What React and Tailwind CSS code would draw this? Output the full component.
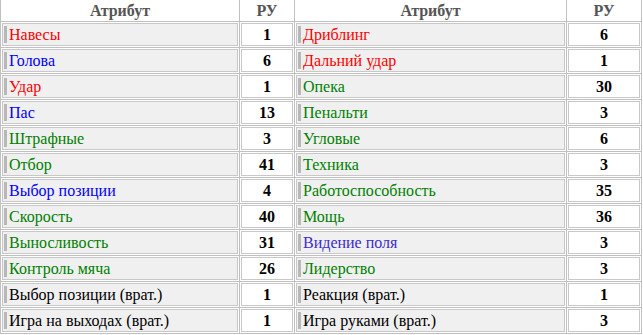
import React from 'react';

const rows = [
  ['Навесы', 'red', 1, 'Дриблинг', 'red', 6],
  ['Голова', 'blue', 6, 'Дальний удар', 'red', 1],
  ['Удар', 'red', 1, 'Опека', 'green', 30],
  ['Пас', 'blue', 13, 'Пенальти', 'green', 3],
  ['Штрафные', 'green', 3, 'Угловые', 'green', 6],
  ['Отбор', 'green', 41, 'Техника', 'green', 3],
  ['Выбор позиции', 'blue', 4, 'Работоспособность', 'green', 35],
  ['Скорость', 'green', 40, 'Мощь', 'green', 36],
  ['Выносливость', 'green', 31, 'Видение поля', 'violet', 3],
  ['Контроль мяча', 'green', 26, 'Лидерство', 'green', 3],
  ['Выбор позиции (врат.)', 'black', 1, 'Реакция (врат.)', 'black', 1],
  ['Игра на выходах (врат.)', 'black', 1, 'Игра руками (врат.)', 'black', 3],
];

const colors = {
  red: 'text-[#ff0000]',
  blue: 'text-[#0000ff]',
  green: 'text-[#008000]',
  violet: 'text-[#3a2bd6]',
  black: 'text-black',
};

function AttrCell({ name, color }) {
  return (
    <div className="bg-white p-px">
      <div className="flex h-[23px] items-center border border-[#c8c8c8] bg-[#f0f0f0]">
        <span className="ml-px mr-[2px] h-[17px] w-[3px] bg-[#b8b8b8]" />
        <span className={`whitespace-nowrap leading-none ${colors[color]}`}>{name}</span>
      </div>
    </div>
  );
}

function ValueCell({ value }) {
  return (
    <div className="bg-white p-px">
      <div className="flex h-[23px] items-center justify-center border border-[#c8c8c8] bg-white font-bold leading-none text-black">
        {value}
      </div>
    </div>
  );
}

export default function App() {
  return (
    <div className="h-[335px] w-[643px] bg-white font-['Liberation_Serif','Times_New_Roman',serif]">
      <div className="grid w-[642px] grid-cols-[238px_54px_271px_74px] gap-px bg-[#c0c0c0] px-px pb-px text-[16px]">
        {['Атрибут', 'РУ', 'Атрибут', 'РУ'].map((h, i) => (
          <div key={i} className="flex h-[21px] items-center justify-center bg-white font-bold text-[#555555]">
            {h}
          </div>
        ))}
        {rows.map((r, i) => (
          <React.Fragment key={i}>
            <AttrCell name={r[0]} color={r[1]} />
            <ValueCell value={r[2]} />
            <AttrCell name={r[3]} color={r[4]} />
            <ValueCell value={r[5]} />
          </React.Fragment>
        ))}
      </div>
    </div>
  );
}
